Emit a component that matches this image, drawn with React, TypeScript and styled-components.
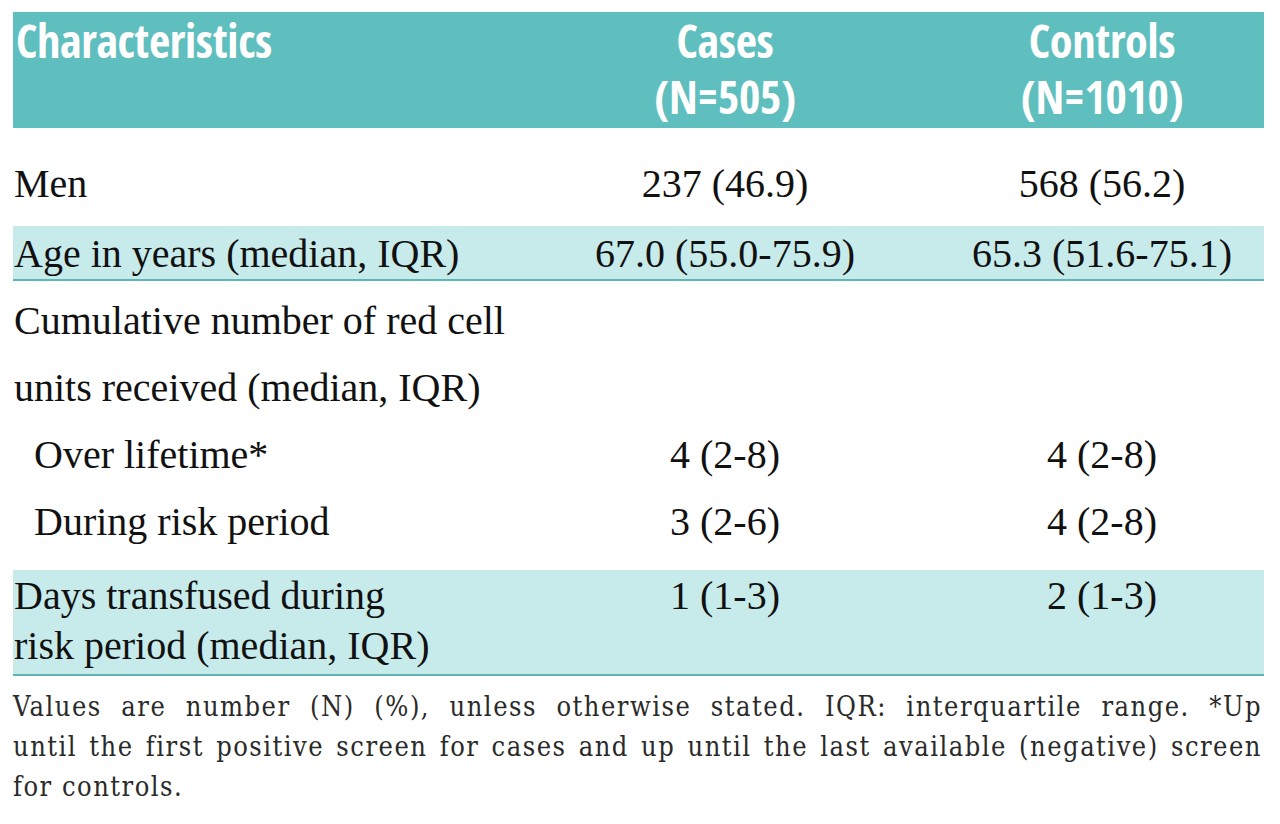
import React from "react";
import styled, { createGlobalStyle } from "styled-components";

const Global = createGlobalStyle`
  html, body { margin: 0; padding: 0; background: #ffffff; }
`;

const SERIF = `"Liberation Serif", "Times New Roman", serif`;

const Page = styled.div`
  width: 1280px;
  height: 824px;
  box-sizing: border-box;
  padding: 12px 16px 0 13px;
  overflow: hidden;
  font-family: ${SERIF};
  color: #111;
`;

const Table = styled.div`
  width: 1251px;
`;

const COLS = "497px 430px 324px";

const HeaderRow = styled.div`
  display: grid;
  grid-template-columns: ${COLS};
  background: #5fbebe;
  padding: 0 0 4px;
`;

const HeadCell = styled.div<{ $center?: boolean }>`
  font-family: "Open Sans Condensed", "Roboto Condensed", sans-serif;
  font-weight: 700;
  font-size: 46px;
  line-height: 56px;
  color: #ffffff;
  letter-spacing: -0.3px;
  text-align: ${(p) => (p.$center ? "center" : "left")};
  padding-left: ${(p) => (p.$center ? "0" : "3px")};
`;

const Row = styled.div<{ $shaded?: boolean; $pt?: number; $pb?: number; $lh?: number }>`
  display: grid;
  grid-template-columns: ${COLS};
  background: ${(p) => (p.$shaded ? "#c7ebeb" : "transparent")};
  border-bottom: ${(p) => (p.$shaded ? "2px solid #5cb6b4" : "none")};
  padding-top: ${(p) => p.$pt ?? 0}px;
  padding-bottom: ${(p) => p.$pb ?? 0}px;
  font-family: ${SERIF};
  font-size: 40px;
  line-height: ${(p) => p.$lh ?? 50}px;
  color: #111;
`;

const Label = styled.div<{ $indent?: boolean }>`
  white-space: nowrap;
  padding-left: ${(p) => (p.$indent ? "21px" : "1px")};
`;

const Value = styled.div`
  text-align: center;
  white-space: nowrap;
`;

const Footnote = styled.div`
  margin-top: 11px;
  font-family: "DejaVu Serif Condensed", "DejaVu Serif", serif;
  font-size: 27px;
  line-height: 40px;
  letter-spacing: 1.5px;
  color: #2a2a2a;
  width: 1249px;
`;

const FootLine = styled.div<{ $justify?: boolean }>`
  text-align: justify;
  text-align-last: ${(p) => (p.$justify ? "justify" : "left")};
  white-space: nowrap;
`;

export default function App() {
  return (
    <>
      <Global />
      <Page>
        <Table>
          <HeaderRow>
            <HeadCell>Characteristics</HeadCell>
            <HeadCell $center>
              Cases
              <br />
              (N=505)
            </HeadCell>
            <HeadCell $center>
              Controls
              <br />
              (N=1010)
            </HeadCell>
          </HeaderRow>

          <Row $pt={31} $pb={17}>
            <Label>Men</Label>
            <Value>237 (46.9)</Value>
            <Value>568 (56.2)</Value>
          </Row>

          <Row $shaded $pt={3} $pb={0}>
            <Label>Age in years (median, IQR)</Label>
            <Value>67.0 (55.0-75.9)</Value>
            <Value>65.3 (51.6-75.1)</Value>
          </Row>

          <Row $pt={6} $lh={67}>
            <Label>
              Cumulative number of red cell
              <br />
              units received (median, IQR)
            </Label>
            <Value />
            <Value />
          </Row>

          <Row $lh={67}>
            <Label $indent>Over lifetime*</Label>
            <Value>4 (2-8)</Value>
            <Value>4 (2-8)</Value>
          </Row>

          <Row $lh={67} $pb={15}>
            <Label $indent>During risk period</Label>
            <Value>3 (2-6)</Value>
            <Value>4 (2-8)</Value>
          </Row>

          <Row $shaded $pt={1} $pb={3}>
            <Label>
              Days transfused during
              <br />
              risk period (median, IQR)
            </Label>
            <Value>1 (1-3)</Value>
            <Value>2 (1-3)</Value>
          </Row>
        </Table>

        <Footnote>
          <FootLine $justify>
            Values are number (N) (%), unless otherwise stated. IQR: interquartile range. *Up
          </FootLine>
          <FootLine $justify>
            until the first positive screen for cases and up until the last available (negative) screen
          </FootLine>
          <FootLine>for controls.</FootLine>
        </Footnote>
      </Page>
    </>
  );
}
